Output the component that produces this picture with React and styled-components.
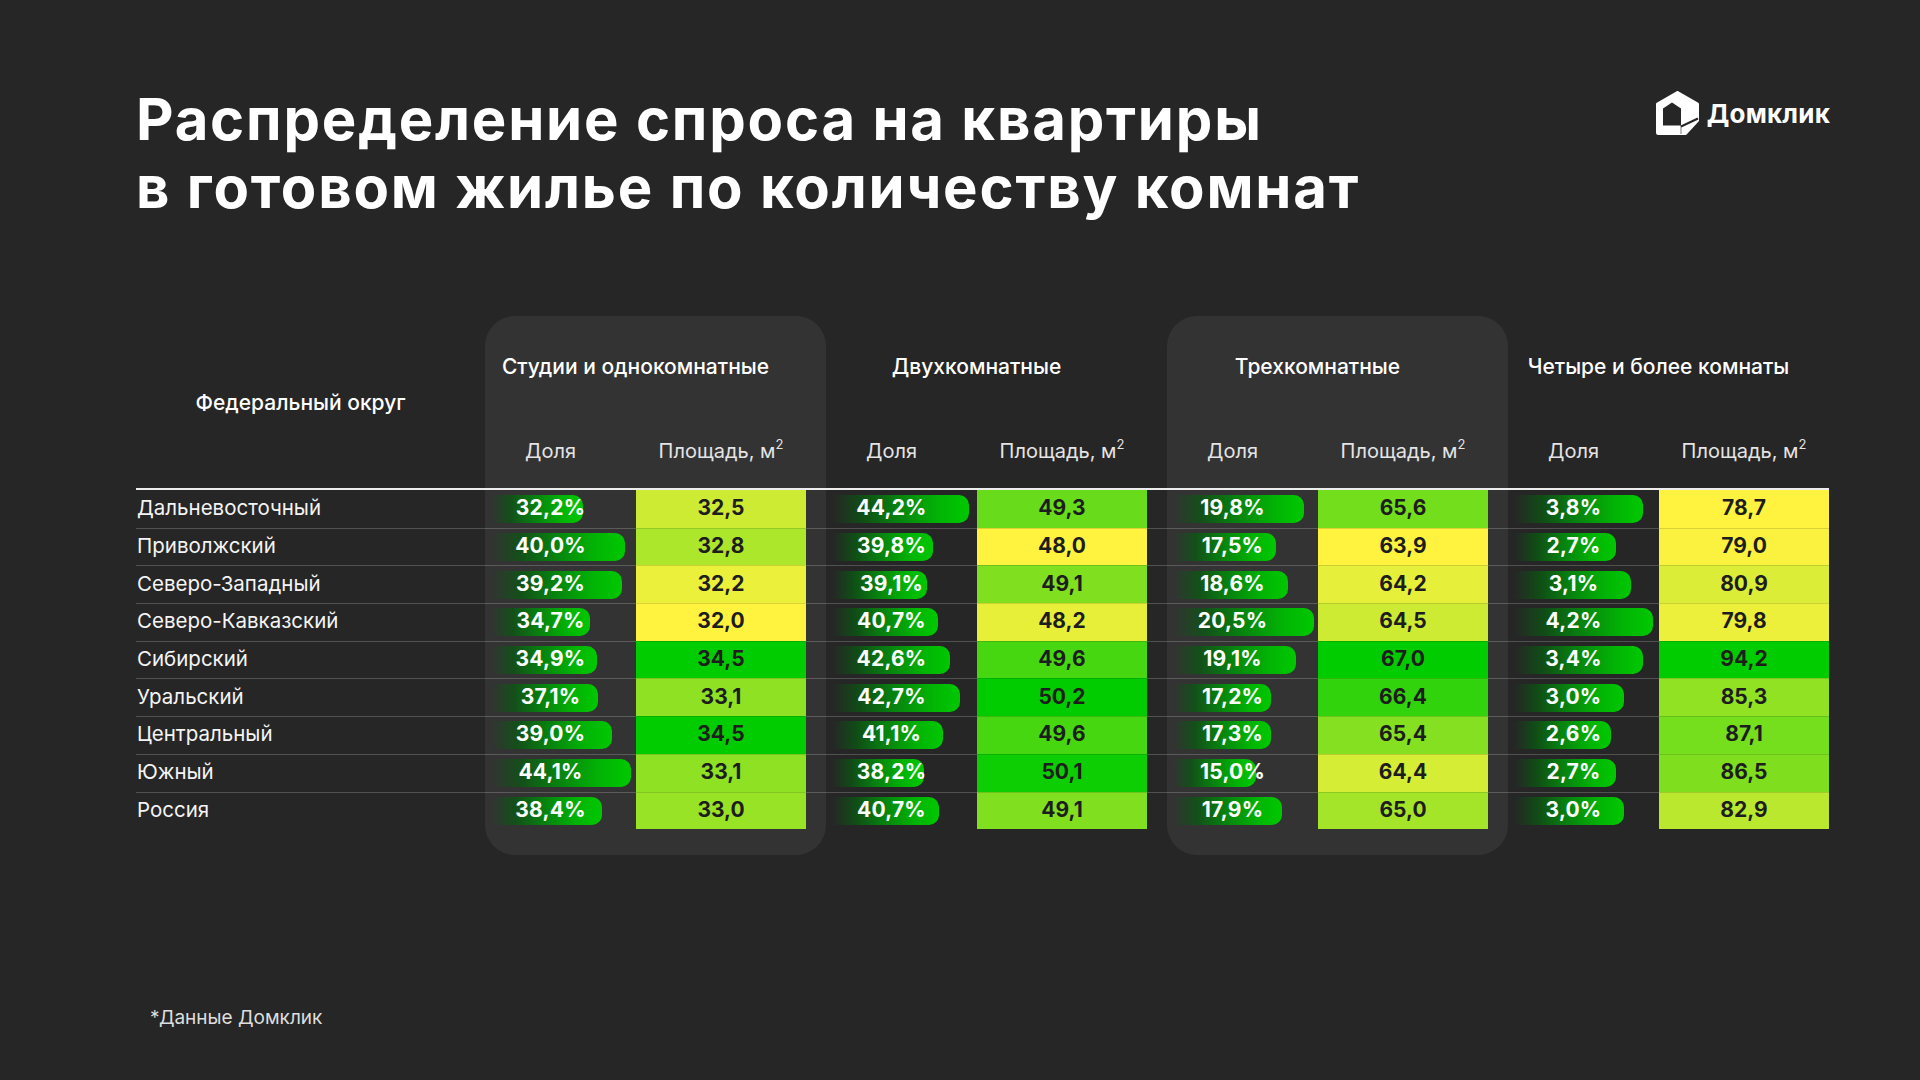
import React from 'react';
import styled, { createGlobalStyle } from 'styled-components';

const GlobalStyle = createGlobalStyle`
  html, body { margin: 0; padding: 0; background: #262626; }
  body { font-family: Inter, "Noto Sans", sans-serif; color: #fff; }
  * { box-sizing: border-box; }
`;

const groups = [
  {
    title: 'Студии и однокомнатные',
    panel: true,
    share: ['32,2%', '40,0%', '39,2%', '34,7%', '34,9%', '37,1%', '39,0%', '44,1%', '38,4%'],
    bars: [92, 134, 131, 99, 106, 107, 121, 140, 111],
    area: [32.5, 32.8, 32.2, 32.0, 34.5, 33.1, 34.5, 33.1, 33.0],
  },
  {
    title: 'Двухкомнатные',
    panel: false,
    share: ['44,2%', '39,8%', '39,1%', '40,7%', '42,6%', '42,7%', '41,1%', '38,2%', '40,7%'],
    bars: [137, 101, 95, 106, 118, 128, 111, 92, 107],
    area: [49.3, 48.0, 49.1, 48.2, 49.6, 50.2, 49.6, 50.1, 49.1],
  },
  {
    title: 'Трехкомнатные',
    panel: true,
    share: ['19,8%', '17,5%', '18,6%', '20,5%', '19,1%', '17,2%', '17,3%', '15,0%', '17,9%'],
    bars: [131, 103, 115, 141, 123, 98, 98, 83, 109],
    area: [65.6, 63.9, 64.2, 64.5, 67.0, 66.4, 65.4, 64.4, 65.0],
  },
  {
    title: 'Четыре и более комнаты',
    panel: false,
    last: true,
    share: ['3,8%', '2,7%', '3,1%', '4,2%', '3,4%', '3,0%', '2,6%', '2,7%', '3,0%'],
    bars: [129, 102, 117, 139, 129, 110, 97, 102, 110],
    area: [78.7, 79.0, 80.9, 79.8, 94.2, 85.3, 87.1, 86.5, 82.9],
  },
];

const regions = [
  'Дальневосточный',
  'Приволжский',
  'Северо-Западный',
  'Северо-Кавказский',
  'Сибирский',
  'Уральский',
  'Центральный',
  'Южный',
  'Россия',
];

const fmt = (v) => v.toFixed(1).replace('.', ',');

const scaleColor = (v, arr) => {
  const min = Math.min(...arr);
  const max = Math.max(...arr);
  const t = (v - min) / (max - min);
  const from = [255, 243, 63];
  const to = [0, 204, 0];
  const c = from.map((f, i) => Math.round(f + (to[i] - f) * t));
  return `rgb(${c[0]}, ${c[1]}, ${c[2]})`;
};

const Page = styled.div`
  width: 1920px;
  height: 1080px;
  padding: 85px 90px 0 136px;
  display: flex;
  flex-direction: column;
`;

const Top = styled.header`
  display: flex;
  justify-content: space-between;
  align-items: flex-start;
`;

const Title = styled.h1`
  margin: 0;
  font-family: Inter, sans-serif;
  font-size: 58px;
  line-height: 68px;
  font-weight: 700;
  letter-spacing: 1.8px;
  color: #ffffff;
`;

const Logo = styled.div`
  display: flex;
  align-items: center;
  gap: 8px;
  margin-top: 6px;
`;

const LogoText = styled.span`
  font-family: Inter, sans-serif;
  font-size: 26px;
  font-weight: 700;
  color: #ffffff;
  letter-spacing: 0.2px;
`;

const Table = styled.div`
  display: flex;
  margin-top: 95px;
`;

const LabelColumn = styled.div`
  width: 349px;
  display: flex;
  flex-direction: column;
`;

const LabelHead = styled.div`
  height: 174px;
  border-bottom: 2px solid #ececec;
  display: flex;
  align-items: center;
  justify-content: center;
  padding-right: 20px;
  font-size: 21px;
  font-weight: 500;
  color: #ffffff;
`;

const Group = styled.div`
  width: ${(p) => (p.$last ? '321px' : '341px')};
  background: ${(p) => (p.$panel ? '#333333' : 'transparent')};
  border-radius: 30px;
  padding-bottom: 26px;
  display: flex;
  flex-direction: column;
`;

const GroupHead = styled.div`
  height: 174px;
  border-bottom: 2px solid #ececec;
  display: flex;
  flex-direction: column;
`;

const GroupTitle = styled.div`
  height: 98px;
  width: 321px;
  padding-right: 20px;
  padding-top: 2px;
  display: flex;
  align-items: center;
  justify-content: center;
  font-size: 21px;
  font-weight: 500;
  color: #ffffff;
`;

const SubHead = styled.div`
  flex: 1;
  display: grid;
  grid-template-columns: 151px 170px;
  align-items: center;
`;

const SubLabel = styled.div`
  text-align: center;
  font-size: 20px;
  font-weight: 400;
  color: #e4e4e4;
  padding-right: ${(p) => (p.$share ? '20px' : '0')};

  sup {
    font-size: 13px;
    vertical-align: 9px;
    line-height: 0;
  }
`;

const Row = styled.div`
  height: 37.7px;
  display: grid;
  grid-template-columns: ${(p) => (p.$last ? '151px 170px' : '151px 170px 20px')};
`;

const RowLine = `
  border-top: 1px solid rgba(255, 255, 255, 0.2);
`;

const LabelCell = styled.div`
  height: 37.7px;
  ${(p) => (p.$first ? '' : RowLine)}
  display: flex;
  align-items: center;
  font-size: 20.5px;
  font-weight: 400;
  color: #f4f4f4;
  padding-left: 1px;
  padding-bottom: 3px;
`;

const ShareCell = styled.div`
  ${(p) => (p.$first ? '' : RowLine)}
  display: grid;
  align-items: center;
`;

const Bar = styled.div`
  grid-area: 1 / 1;
  height: 28px;
  margin-left: 6px;
  border-radius: 0 10px 10px 0;
  background: linear-gradient(
    90deg,
    rgba(0, 120, 10, 0) 0%,
    rgba(8, 90, 16, 0.75) 22%,
    #087c10 45%,
    #02b405 78%,
    #00c800 100%
  );
`;

const ShareText = styled.span`
  grid-area: 1 / 1;
  width: 131px;
  text-align: center;
  font-size: 21px;
  font-weight: 700;
  color: #ffffff;
  letter-spacing: 0.2px;
  padding-bottom: 3px;
`;

const AreaCell = styled.div`
  ${(p) => (p.$first ? '' : 'border-top: 1px solid rgba(0, 0, 0, 0.13);')}
  display: flex;
  align-items: center;
  justify-content: center;
  font-size: 21px;
  font-weight: 700;
  color: #1d1d1d;
  padding-bottom: 3px;
`;

const GapCell = styled.div`
  ${(p) => (p.$first ? '' : RowLine)}
`;

const Footer = styled.div`
  margin-top: auto;
  padding: 0 0 50px 14px;
  font-size: 19px;
  line-height: 24px;
  font-weight: 400;
  color: #dedede;
`;

const HouseIcon = () => (
  <svg width="43" height="44" viewBox="0 0 43 44" aria-hidden="true">
    <path
      d="M21.5 1.5 L41.5 13 V29.5 L29.5 42.5 H2.5 Q1.5 42.5 1.5 41.5 V13 Z"
      fill="#ffffff"
      stroke="#ffffff"
      strokeWidth="3"
      strokeLinejoin="round"
    />
    <path d="M7 17.5 L16 11.5 L25 17.5 V34.5 H7 Z" fill="#262626" />
    <path d="M25 35.5 L42 27.5" stroke="#262626" strokeWidth="2.2" />
    <path d="M25 34.5 L25 43" stroke="#262626" strokeWidth="1.2" opacity="0.5" />
  </svg>
);

export default function App() {
  return (
    <>
      <GlobalStyle />
      <Page>
        <Top>
          <Title>
            Распределение спроса на квартиры
            <br />в готовом жилье по количеству комнат
          </Title>
          <Logo>
            <HouseIcon />
            <LogoText>Домклик</LogoText>
          </Logo>
        </Top>

        <Table>
          <LabelColumn>
            <LabelHead>Федеральный округ</LabelHead>
            {regions.map((r, i) => (
              <LabelCell key={r} $first={i === 0}>
                {r}
              </LabelCell>
            ))}
          </LabelColumn>

          {groups.map((g) => (
            <Group key={g.title} $panel={g.panel} $last={g.last}>
              <GroupHead>
                <GroupTitle>{g.title}</GroupTitle>
                <SubHead>
                  <SubLabel $share>Доля</SubLabel>
                  <SubLabel>
                    Площадь, м<sup>2</sup>
                  </SubLabel>
                </SubHead>
              </GroupHead>
              {regions.map((r, i) => (
                <Row key={r} $last={g.last}>
                  <ShareCell $first={i === 0}>
                    <Bar style={{ width: `${g.bars[i]}px` }} />
                    <ShareText>{g.share[i]}</ShareText>
                  </ShareCell>
                  <AreaCell
                    $first={i === 0}
                    style={{ background: scaleColor(g.area[i], g.area) }}
                  >
                    {fmt(g.area[i])}
                  </AreaCell>
                  {!g.last && <GapCell $first={i === 0} />}
                </Row>
              ))}
            </Group>
          ))}
        </Table>

        <Footer>*Данные Домклик</Footer>
      </Page>
    </>
  );
}
